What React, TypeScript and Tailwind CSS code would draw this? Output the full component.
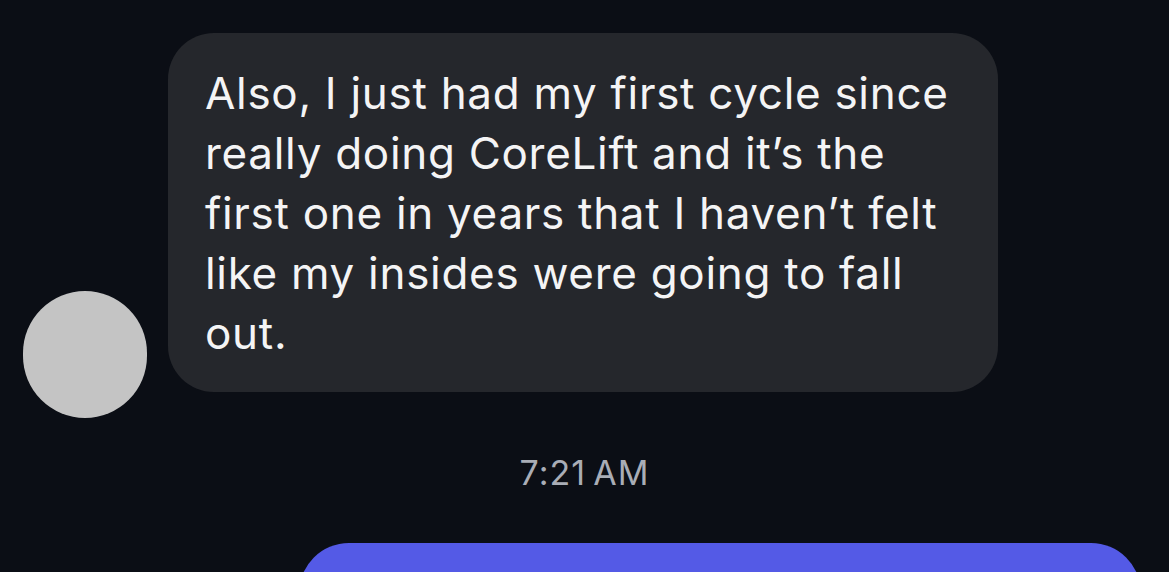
import React from "react";

const lines = [
    "Also, I just had my first cycle since",
    "really doing CoreLift and it\u2019s the",
    "first one in years that I haven\u2019t felt",
    "like my insides were going to fall",
    "out.",
];

export default function App() {
    return (
        <div
            className="w-[1169px] h-[572px] overflow-hidden bg-[#0b0e15] flex flex-col pt-[33px]"
            style={{ fontFamily: "Inter, 'Liberation Sans', sans-serif" }}
        >
            {/* incoming message */}
            <div className="flex items-end pl-[23px] gap-[21px]">
                <div className="w-[124px] h-[127px] rounded-full bg-[#c4c4c4] flex-shrink-0 -mb-[26px]" />
                <div className="w-[830px] bg-[#25272c] rounded-[46px] pl-[37px] pr-[30px] pt-[30px] pb-[29px]">
                    <p className="text-[44px] leading-[60px] text-[#f4f4f5] tracking-[0.7px] whitespace-nowrap">
                        {lines.map((l, i) => (
                            <React.Fragment key={i}>
                                {l}
                                {i < lines.length - 1 && <br />}
                            </React.Fragment>
                        ))}
                    </p>
                </div>
            </div>

            {/* timestamp */}
            <div className="mt-[61px] text-center text-[34px] leading-[40px] text-[#a9adb6] tracking-[1px]">
                7:21{"\u2009"}AM
            </div>

            {/* outgoing message (cut off) */}
            <div className="mt-[50px] ml-[299px] w-[842px] h-[80px] bg-[#545ae6] rounded-t-[50px] flex-shrink-0" />
        </div>
    );
}
